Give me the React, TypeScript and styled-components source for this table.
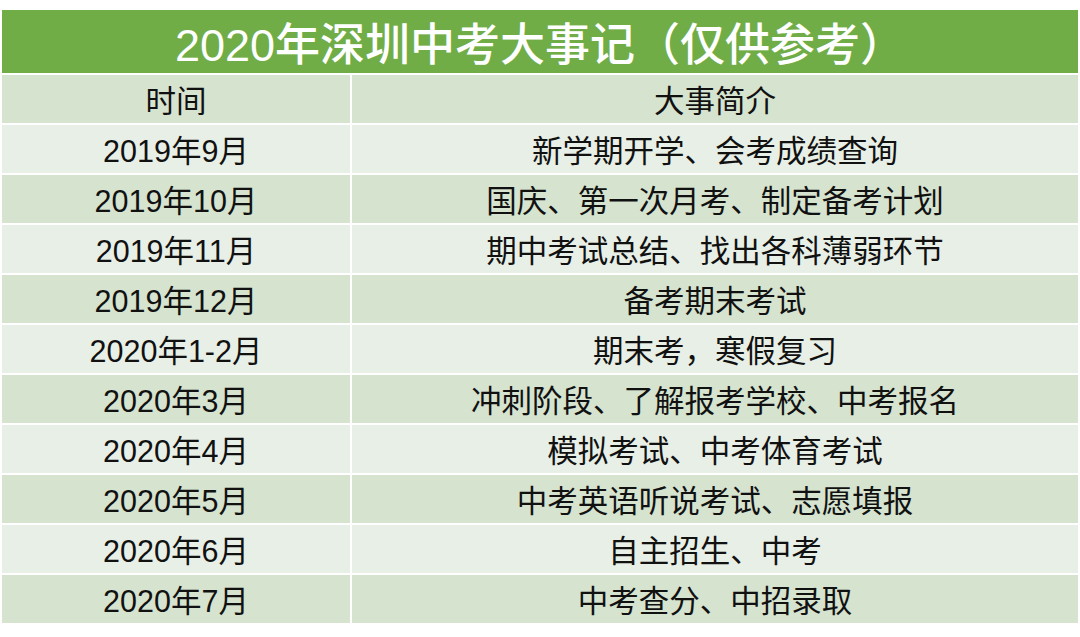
import { Fragment } from 'react';
import styled, { createGlobalStyle } from 'styled-components';

const GlobalStyle = createGlobalStyle`
  html, body {
    margin: 0;
    padding: 0;
    background: #ffffff;
  }
`;

const Page = styled.div`
  padding: 10px 2px 0 2px;
  width: 1076px;
`;

const Table = styled.div`
  display: grid;
  grid-template-columns: 348px 1fr;
  column-gap: 2px;
  row-gap: 2px;
  background: #ffffff;
`;

const Title = styled.div`
  grid-column: 1 / -1;
  height: 63px;
  background: #70ad47;
  color: #ffffff;
  display: flex;
  align-items: center;
  justify-content: center;
  font-family: "Liberation Sans", "Noto Sans CJK SC", sans-serif;
  font-size: 45px;
  font-weight: 500;
`;

const Cell = styled.div<{ $shade: 'dark' | 'light' }>`
  height: 48px;
  background: ${(p) => (p.$shade === 'dark' ? '#d5e3cf' : '#e8efe6')};
  color: #111111;
  display: flex;
  align-items: center;
  justify-content: center;
  font-family: "Liberation Sans", "Noto Sans CJK SC", sans-serif;
  font-size: 30.5px;
`;

const rows: [string, string][] = [
  ['2019年9月', '新学期开学、会考成绩查询'],
  ['2019年10月', '国庆、第一次月考、制定备考计划'],
  ['2019年11月', '期中考试总结、找出各科薄弱环节'],
  ['2019年12月', '备考期末考试'],
  ['2020年1-2月', '期末考，寒假复习'],
  ['2020年3月', '冲刺阶段、了解报考学校、中考报名'],
  ['2020年4月', '模拟考试、中考体育考试'],
  ['2020年5月', '中考英语听说考试、志愿填报'],
  ['2020年6月', '自主招生、中考'],
  ['2020年7月', '中考查分、中招录取'],
];

export default function App() {
  return (
    <>
      <GlobalStyle />
      <Page>
        <Table>
          <Title>2020年深圳中考大事记（仅供参考）</Title>
          <Cell $shade="dark">时间</Cell>
          <Cell $shade="dark">大事简介</Cell>
          {rows.map(([time, desc], i) => {
            const shade = i % 2 === 0 ? 'light' : 'dark';
            return (
              <Fragment key={time}>
                <Cell $shade={shade}>{time}</Cell>
                <Cell $shade={shade}>{desc}</Cell>
              </Fragment>
            );
          })}
        </Table>
      </Page>
    </>
  );
}
